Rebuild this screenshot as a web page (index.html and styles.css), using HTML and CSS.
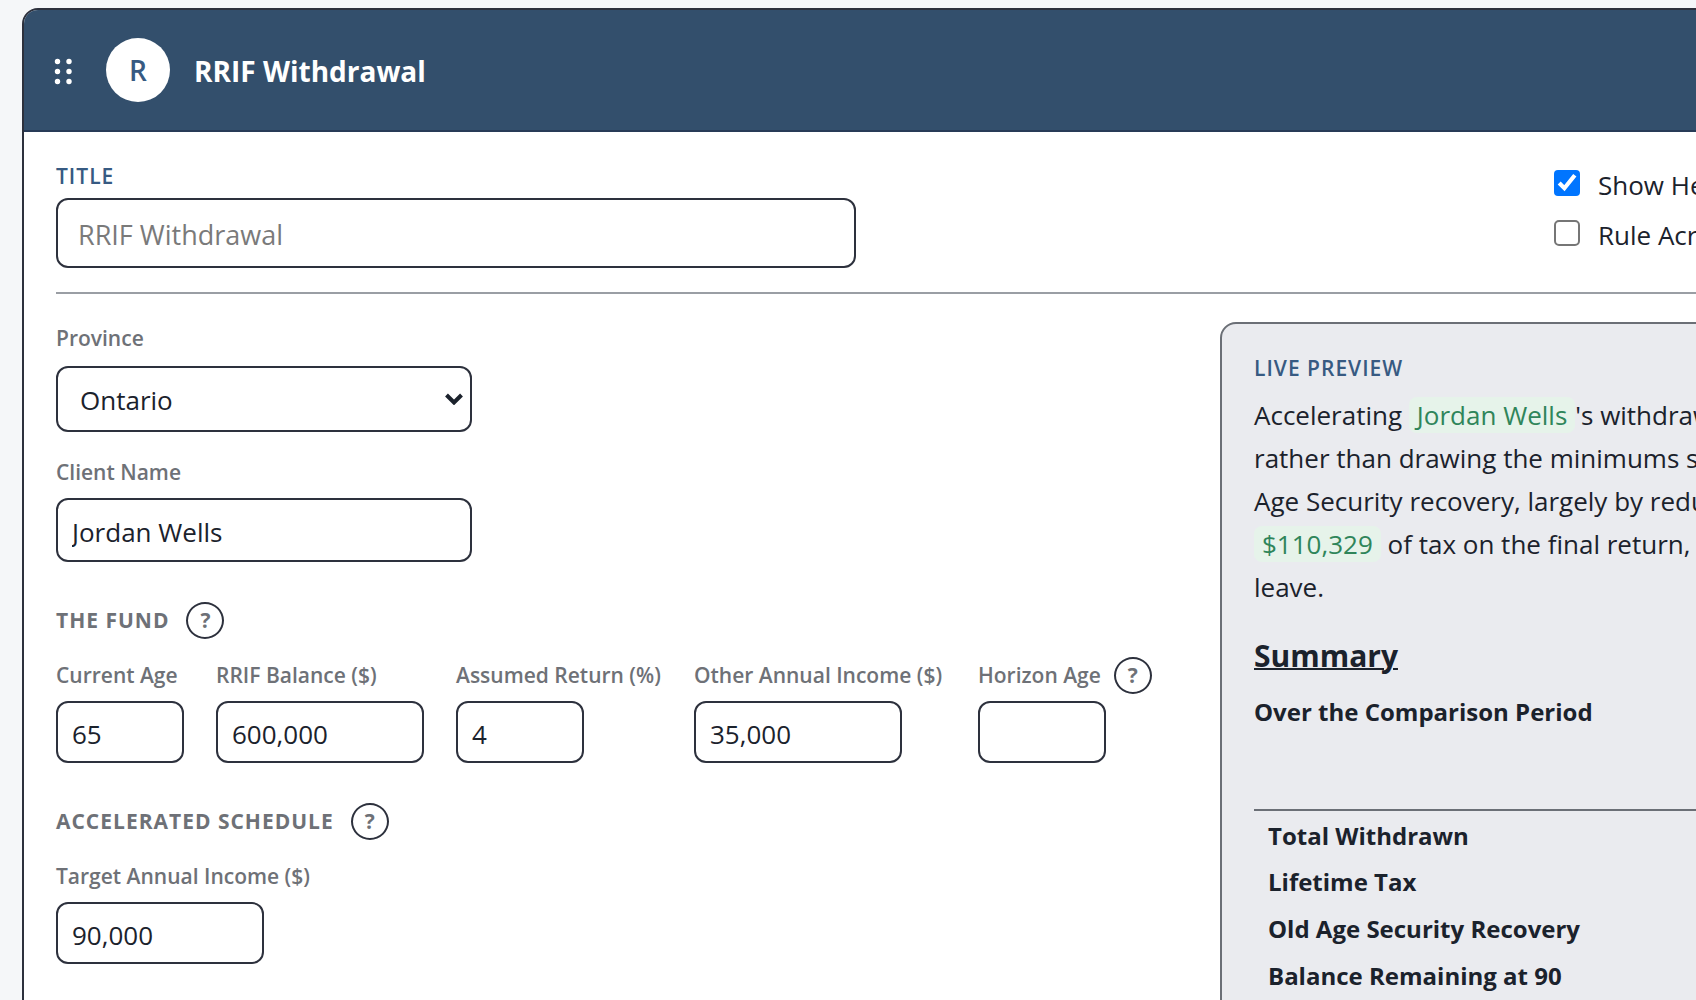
FILE: index.html
```html
<!DOCTYPE html>
<html lang="en">
<head>
<meta charset="utf-8">
<meta name="viewport" content="width=device-width, initial-scale=1">
<title>RRIF Withdrawal</title>
<link rel="stylesheet" href="styles.css">
</head>
<body>
<main class="page">
  <section class="card">
    <header class="card-header">
      <svg class="grip" viewBox="0 0 24 30" aria-hidden="true">
        <circle cx="5.5" cy="6.5" r="2.7"/><circle cx="17" cy="6.5" r="2.7"/>
        <circle cx="5.5" cy="16.5" r="2.7"/><circle cx="17" cy="16.5" r="2.7"/>
        <circle cx="5.5" cy="26.5" r="2.7"/><circle cx="17" cy="26.5" r="2.7"/>
      </svg>
      <span class="badge">R</span>
      <h1 class="card-title">RRIF Withdrawal</h1>
    </header>
    <div class="card-body">
      <div class="title-row">
        <div class="title-field">
          <label class="eyebrow" for="title">TITLE</label>
          <input class="control control-title" id="title" type="text" placeholder="RRIF Withdrawal">
        </div>
        <div class="options">
          <label class="option"><input class="check" type="checkbox" checked><span class="option-text">Show Header</span></label>
          <label class="option"><input class="check" type="checkbox"><span class="option-text">Rule Across</span></label>
        </div>
      </div>
      <div class="columns">
        <form class="fields">
          <div class="field field-wide">
            <label class="label" for="province">Province</label>
            <div class="select-wrap">
              <select class="control control-select" id="province"><option>Ontario</option></select>
              <svg class="chevron" viewBox="0 0 18 12" aria-hidden="true"><path d="M1.5 2L9 9.500l7.500-7.500"/></svg>
            </div>
          </div>
          <div class="field field-wide field-client">
            <label class="label" for="client">Client Name</label>
            <input class="control control-client" id="client" type="text" value="Jordan Wells">
          </div>
          <div class="group-head">
            <h2 class="group-title">THE FUND</h2>
            <button class="help" type="button" aria-label="Help">?</button>
          </div>
          <div class="field-row">
            <div class="field w-age">
              <label class="label" for="age">Current Age</label>
              <input class="control" id="age" type="text" value="65">
            </div>
            <div class="field w-amount">
              <label class="label" for="balance">RRIF Balance ($)</label>
              <input class="control" id="balance" type="text" value="600,000">
            </div>
            <div class="field w-return">
              <label class="label" for="return">Assumed Return (%)</label>
              <input class="control short" id="return" type="text" value="4">
            </div>
            <div class="field w-income">
              <label class="label" for="income">Other Annual Income ($)</label>
              <input class="control amount" id="income" type="text" value="35,000">
            </div>
            <div class="field">
              <div class="label-line">
                <label class="label" for="horizon">Horizon Age</label>
                <button class="help" type="button" aria-label="Help">?</button>
              </div>
              <input class="control short" id="horizon" type="text">
            </div>
          </div>
          <div class="group-head">
            <h2 class="group-title">ACCELERATED SCHEDULE</h2>
            <button class="help" type="button" aria-label="Help">?</button>
          </div>
          <div class="field-row">
            <div class="field">
              <label class="label" for="target">Target Annual Income ($)</label>
              <input class="control amount" id="target" type="text" value="90,000">
            </div>
          </div>
        </form>
        <section class="preview">
          <h2 class="eyebrow">LIVE PREVIEW</h2>
          <p class="preview-text">Accelerating <mark class="fill">Jordan Wells</mark>'s withdrawals<br>
            rather than drawing the minimums saves<br>
            Age Security recovery, largely by reducing<br>
            <mark class="fill">$110,329</mark> of tax on the final return, to<br>
            leave.</p>
          <h3 class="summary">Summary</h3>
          <table class="totals">
            <caption class="totals-caption">Over the Comparison Period</caption>
            <thead><tr><td class="totals-head"></td></tr></thead>
            <tbody>
              <tr><th scope="row">Total Withdrawn</th></tr>
              <tr><th scope="row">Lifetime Tax</th></tr>
              <tr><th scope="row">Old Age Security Recovery</th></tr>
              <tr><th scope="row">Balance Remaining at 90</th></tr>
            </tbody>
          </table>
        </section>
      </div>
    </div>
  </section>
</main>
</body>
</html>
```
FILE: styles.css
```css
* { box-sizing: border-box; }

html { overflow: hidden; }

body {
  margin: 0;
  background: #f5f7f9;
  color: #1b222c;
  font: 400 26px/43px "Open Sans", "Noto Sans", sans-serif;
}

h1, h2, h3, p { margin: 0; }

button, input, select { font: inherit; color: inherit; margin: 0; }

.page { padding: 8px 0 0 22px; }

/* the card is wider than the window and runs off its right edge */
.card {
  margin-right: -690px;
  border: 2px solid #2d313d;
  border-radius: 16px;
  background: #fff;
  overflow: hidden;
}

.card-header {
  display: flex;
  align-items: center;
  height: 122px;
  padding: 0 28px;
  border-bottom: 2px solid #283b57;
  background: #334f6c;
  color: #fff;
}

.grip { width: 24px; height: 30px; margin-right: 30px; fill: #fff; }

.badge {
  display: grid;
  place-items: center;
  width: 64px;
  height: 64px;
  margin-right: 24px;
  border-radius: 50%;
  background: #fff;
  color: #375a82;
  font-size: 28px;
  font-weight: 600;
}

.card-title { padding-top: 2px; font-size: 28px; font-weight: 700; }

.card-body { padding: 28px 32px 40px; }

.title-row {
  display: grid;
  grid-template-columns: 800px 798px;
  justify-content: space-between;
  padding-bottom: 24px;
  border-bottom: 2px solid #9a9ea4;
}

.title-field { display: flex; flex-direction: column; gap: 6px; }

.eyebrow {
  color: #375a82;
  font-size: 21px;
  font-weight: 600;
  line-height: 32px;
  letter-spacing: 1px;
}

.control {
  display: block;
  width: 100%;
  height: 62px;
  padding: 4px 14px 0;
  border: 2px solid #2d313d;
  border-radius: 12px;
  background: #fff;
}

.control-title { height: 70px; padding: 2px 20px 0; font-size: 27px; }
.control-title::placeholder { color: #7a7a7a; opacity: 1; }
.control-client { height: 64px; }
.control-select { height: 66px; padding: 2px 22px 0; appearance: none; }
.short { width: 128px; }
.amount { width: 208px; }

.options { display: flex; flex-direction: column; gap: 8px; padding-top: 2px; }
.option { display: flex; align-items: center; height: 42px; gap: 18px; }
.check { width: 13px; height: 13px; zoom: 2; }
.option-text { padding-top: 4px; }

.columns {
  display: grid;
  grid-template-columns: 1fr 1fr;
  gap: 32px;
  padding-top: 28px;
}

.field { display: flex; flex-direction: column; gap: 10px; }
.field-wide { width: 416px; gap: 12px; }
.field-client { margin-top: 24px; gap: 10px; }

.label {
  color: #6e7177;
  font-size: 21px;
  font-weight: 600;
  line-height: 32px;
  white-space: nowrap;
}

.select-wrap { position: relative; }

.chevron {
  position: absolute;
  top: 27px;
  right: 9px;
  width: 18px;
  height: 12px;
  fill: none;
  stroke: #1b222c;
  stroke-width: 4;
  pointer-events: none;
}

.group-head { display: flex; align-items: center; gap: 17px; height: 38px; margin-top: 39px; }

.group-title {
  color: #6e7177;
  font-size: 21px;
  font-weight: 700;
  letter-spacing: 1px;
}

.help {
  flex: none;
  width: 38px;
  height: 37px;
  padding: 0;
  border: 2px solid #2d313d;
  border-radius: 50%;
  background: #fff;
  color: #6e7177;
  font-size: 21px;
  font-weight: 700;
  line-height: 32px;
}

.field-row { display: flex; align-items: flex-end; gap: 32px; margin-top: 20px; }
.w-age { width: 128px; }
.w-amount { width: 208px; }
.w-return { width: 206px; }
.w-income { width: 252px; }
.label-line { display: flex; align-items: center; gap: 13px; height: 32px; }

.preview {
  padding: 28px 32px 40px;
  border: 2px solid #6b6f76;
  border-radius: 16px;
  background: #eaebef;
}

.preview-text { padding-top: 10px; white-space: nowrap; }

.fill {
  padding: 0 8px;
  border-radius: 8px;
  background: #e6f3ea;
  color: #2f855a;
}

.summary { margin-top: 25px; font-size: 30px; font-weight: 700; text-decoration: underline; text-decoration-thickness: 2px; }

.totals { width: 100%; margin-top: 13px; border-collapse: collapse; }
.totals-caption { font-size: 24px; font-weight: 700; text-align: left; }
.totals-head { height: 77px; padding: 0; border-bottom: 2px solid #6b6f76; }
.totals th { height: 47px; padding: 3px 14px 0; font-size: 24px; font-weight: 700; line-height: 42px; text-align: left; }
```
